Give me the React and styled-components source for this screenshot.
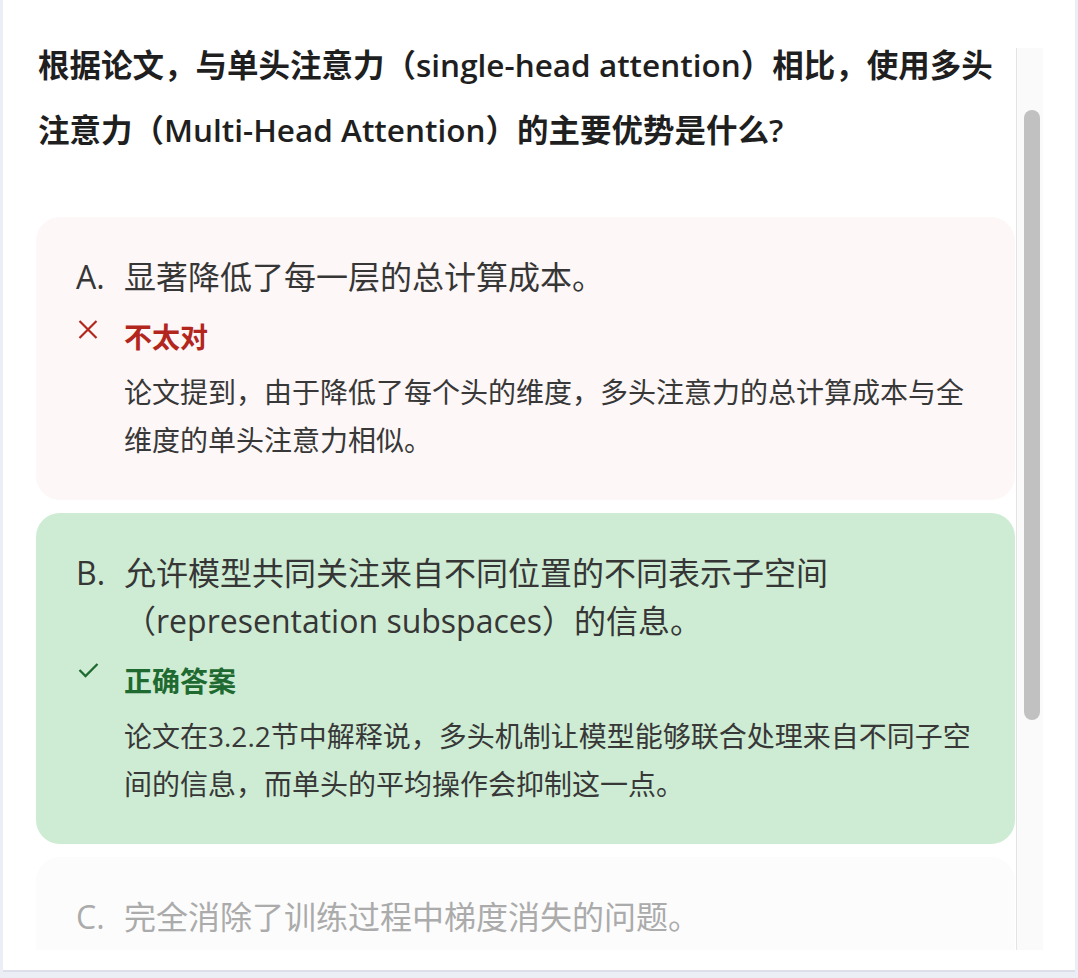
import React from "react";
import styled, { createGlobalStyle } from "styled-components";

const GlobalStyle = createGlobalStyle`
  html, body {
    margin: 0;
    padding: 0;
    background: #eceef6;
  }
  body {
    font-family: "Open Sans", "Noto Sans CJK SC", sans-serif;
  }
  *, *::before, *::after {
    box-sizing: border-box;
  }
`;

const Panel = styled.div`
  margin-left: 3px;
  width: 1072px;
  height: 972px;
  background: #ffffff;
  border-bottom: 2px solid #dcdfe9;
  display: flex;
`;

const Content = styled.div`
  width: 1013px;
  height: 950px;
  padding-left: 33px;
  padding-right: 1px;
  overflow: hidden;
`;

const Question = styled.h1`
  margin: 0 0 55px;
  padding: 32px 0 0 2px;
  font-size: 31.5px;
  line-height: 65px;
  font-weight: 600;
  color: #1f1f1f;
`;

const Options = styled.div`
  display: flex;
  flex-direction: column;
  gap: 13px;
`;

const tones = {
  wrong: { bg: "#fdf7f7", text: "#363636" },
  right: { bg: "#ceecd3", text: "#363636" },
  idle: { bg: "#fcfcfc", text: "#ababab" },
};

const Card = styled.div`
  background: ${(p) => tones[p.$tone].bg};
  color: ${(p) => tones[p.$tone].text};
  border-radius: 24px;
  padding: 36px 40px;
`;

const OptionRow = styled.div`
  display: flex;
  font-size: 32px;
  line-height: 48px;
`;

const Letter = styled.span`
  flex: 0 0 48px;
`;

const OptionText = styled.span`
  flex: 1;
`;

const Verdict = styled.div`
  display: flex;
  align-items: flex-start;
  margin-top: 12px;
  font-size: 28px;
  line-height: 48px;
  font-weight: 700;
  color: ${(p) => (p.$ok ? "#1e6a31" : "#b3261e")};
`;

const IconBox = styled.span`
  flex: 0 0 48px;
  display: flex;
  padding: ${(p) => (p.$ok ? "5px 0 0 2px" : "7px 0 0 2px")};
  svg {
    display: block;
  }
`;

const Explain = styled.p`
  margin: 7px 0 0;
  padding-left: 48px;
  font-size: 28px;
  line-height: 48px;
  color: #383838;
`;

const Track = styled.div`
  margin-top: 48px;
  width: 27px;
  height: 902px;
  border-left: 1px solid #e4e4e4;
  background: #fafafa;
  padding: 62px 0 0 7px;
`;

const Thumb = styled.div`
  width: 16px;
  height: 610px;
  border-radius: 8px;
  background: #c1c1c1;
`;

const CrossIcon = () => (
  <svg width="20" height="19" viewBox="0 0 20 19">
    <path d="M1.5 1 L18.5 18 M18.5 1 L1.5 18" stroke="#b3261e" strokeWidth="2.2" fill="none" />
  </svg>
);

const CheckIcon = () => (
  <svg width="21" height="16" viewBox="0 0 21 16">
    <path d="M1.5 8 L7.5 14 L19.5 2" stroke="#1e6a31" strokeWidth="2.3" fill="none" />
  </svg>
);

const options = [
  {
    letter: "A.",
    text: "显著降低了每一层的总计算成本。",
    tone: "wrong",
    verdict: "不太对",
    explain: "论文提到，由于降低了每个头的维度，多头注意力的总计算成本与全维度的单头注意力相似。",
  },
  {
    letter: "B.",
    text: "允许模型共同关注来自不同位置的不同表示子空间（representation subspaces）的信息。",
    tone: "right",
    verdict: "正确答案",
    explain: "论文在3.2.2节中解释说，多头机制让模型能够联合处理来自不同子空间的信息，而单头的平均操作会抑制这一点。",
  },
  {
    letter: "C.",
    text: "完全消除了训练过程中梯度消失的问题。",
    tone: "idle",
  },
];

export default function App() {
  return (
    <>
      <GlobalStyle />
      <Panel>
        <Content>
          <Question>
            根据论文，与单头注意力（single-head attention）相比，使用多头注意力（Multi-Head Attention）的主要优势是什么?
          </Question>
          <Options>
            {options.map((o) => (
              <Card key={o.letter} $tone={o.tone}>
                <OptionRow>
                  <Letter>{o.letter}</Letter>
                  <OptionText>{o.text}</OptionText>
                </OptionRow>
                {o.verdict && (
                  <>
                    <Verdict $ok={o.tone === "right"}>
                      <IconBox $ok={o.tone === "right"}>
                        {o.tone === "right" ? <CheckIcon /> : <CrossIcon />}
                      </IconBox>
                      <span>{o.verdict}</span>
                    </Verdict>
                    <Explain>{o.explain}</Explain>
                  </>
                )}
              </Card>
            ))}
          </Options>
        </Content>
        <Track>
          <Thumb />
        </Track>
      </Panel>
    </>
  );
}
